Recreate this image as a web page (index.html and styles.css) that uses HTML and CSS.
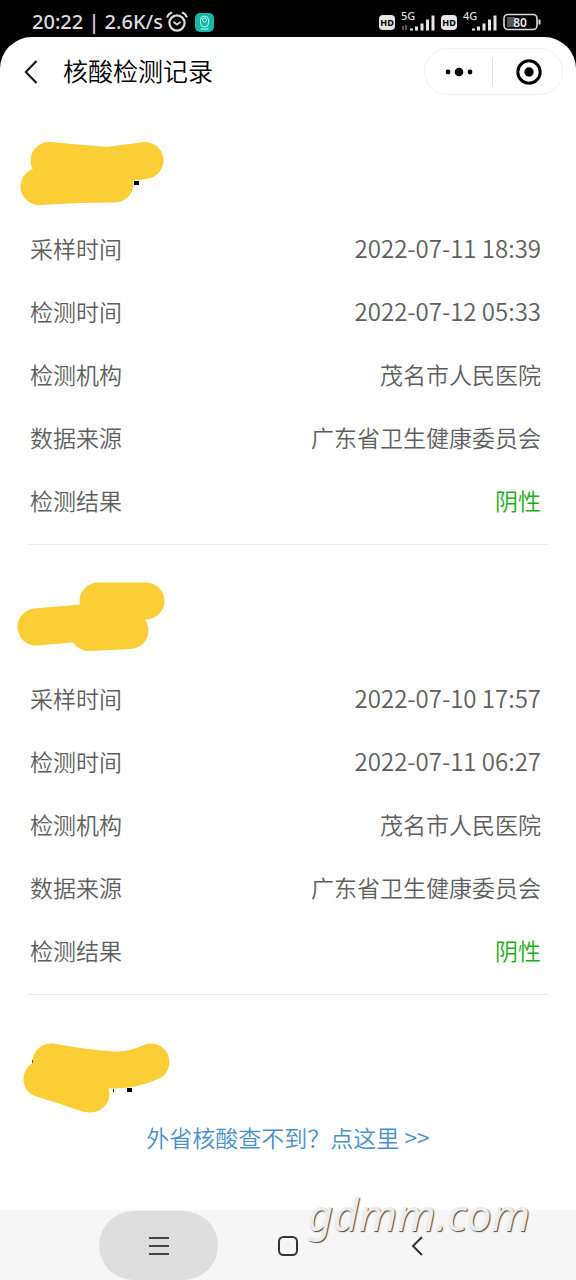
FILE: index.html
```html
<!DOCTYPE html>
<html lang="zh-CN">
<head>
<meta charset="utf-8">
<meta name="viewport" content="width=device-width, initial-scale=1">
<title>核酸检测记录</title>
<link rel="stylesheet" href="styles.css">
</head>
<body>
<div class="status">
  <div class="status-left">
    <span>20:22 | 2.6K/s</span>
    <svg width="22" height="22" viewBox="0 0 22 22" fill="none" stroke="#dcdcdc" stroke-width="2.2" stroke-linecap="round"><circle cx="11" cy="12" r="7.6"/><path d="M8 11.2l3 2.4 3-2.4" stroke-width="1.8"/><path d="M1.4 5.6Q2.6 3 5.2 1.8M20.6 5.6Q19.4 3 16.8 1.8"/></svg>
    <svg class="app-badge" width="19" height="19" viewBox="0 0 19 19" fill="none" stroke="#b9fff4"><rect width="19" height="19" rx="5" fill="#14b8a6" stroke="none"/><rect x="5.5" y="3" width="8" height="11" rx="4"/><circle cx="9.5" cy="7" r="2"/><path d="M5.5 16h8"/></svg>
  </div>
  <div class="status-right">
    <span class="hd">HD</span>
    <span class="signal"><span class="net">5G</span><svg width="34" height="20" viewBox="0 0 34 20"><path d="M2 18v-4M5 13v5" stroke="#777" stroke-width="1.5"/><path d="M9 16.500h3v2h-3zM14 14.500h3v4h-3zM19.500 11.500h3v7h-3zM25 7.500h3v11h-3zM30.500 3.500h3v15h-3z" fill="#e4e4e4"/></svg></span>
    <span class="hd">HD</span>
    <span class="signal"><span class="net">4G</span><svg width="34" height="20" viewBox="0 0 34 20"><path d="M9 16.500h3v2h-3zM14 14.500h3v4h-3zM19.500 11.500h3v7h-3zM25 7.500h3v11h-3zM30.500 3.500h3v15h-3z" fill="#e4e4e4"/></svg></span>
    <svg class="battery" width="38" height="18" viewBox="0 0 38 18"><rect x="1" y="1.500" width="33" height="15" rx="4" fill="none" stroke="#dcdcdc" stroke-width="1.6"/><path d="M4 4h8v10H4z" fill="#555"/><path d="M36.500 6.500v5" stroke="#dcdcdc" stroke-width="2"/><text class="level" x="17" y="13.500" text-anchor="middle">80</text></svg>
  </div>
</div>

<div class="screen">
  <header class="header">
    <button class="back" aria-label="返回"><svg width="14" height="24" viewBox="0 0 14 24" fill="none" stroke="#111" stroke-width="2"><path d="M12.500 1L1.800 12l10.700 11"/></svg></button>
    <h1 class="title">核酸检测记录</h1>
    <div class="capsule">
      <button class="capsule-btn" aria-label="更多"><svg width="28" height="10" viewBox="0 0 28 10"><circle cx="3" cy="5" r="2.400"/><circle cx="14" cy="5" r="4.300"/><circle cx="25" cy="5" r="2.400"/></svg></button>
      <button class="capsule-btn" aria-label="关闭"><svg width="26" height="26" viewBox="0 0 26 26"><circle cx="13" cy="13" r="11.200" fill="none" stroke="#000" stroke-width="3"/><circle cx="13" cy="13" r="4.700"/></svg></button>
    </div>
  </header>

  <main class="main">
    <section class="record">
      <svg class="name" width="180" height="112" viewBox="0 0 180 112"><path d="M134 75h5v4h-5z"/><path class="marker" d="M49 54.500Q74 57 107 59.500L145 54.500"/><path class="marker" d="M39 80.500Q80 78 115 78"/><path class="fill" d="M40 60h75v25H40z"/></svg>
      <dl class="fields">
        <div class="field"><dt>采样时间</dt><dd class="time">2022-07-11 18:39</dd></div>
        <div class="field"><dt>检测时间</dt><dd class="time">2022-07-12 05:33</dd></div>
        <div class="field"><dt>检测机构</dt><dd>茂名市人民医院</dd></div>
        <div class="field"><dt>数据来源</dt><dd>广东省卫生健康委员会</dd></div>
        <div class="field"><dt>检测结果</dt><dd class="negative">阴性</dd></div>
      </dl>
    </section>
    <section class="record">
      <svg class="name" width="180" height="112" viewBox="0 0 180 112"><path class="marker" d="M98 45H146M36 71L100 65.500M89 76.500L130 74.500"/></svg>
      <dl class="fields">
        <div class="field"><dt>采样时间</dt><dd class="time">2022-07-10 17:57</dd></div>
        <div class="field"><dt>检测时间</dt><dd class="time">2022-07-11 06:27</dd></div>
        <div class="field"><dt>检测机构</dt><dd>茂名市人民医院</dd></div>
        <div class="field"><dt>数据来源</dt><dd>广东省卫生健康委员会</dd></div>
        <div class="field"><dt>检测结果</dt><dd class="negative">阴性</dd></div>
      </dl>
    </section>
    <section class="record">
      <svg class="name" width="180" height="112" viewBox="0 0 180 112"><path d="M127 82h5v4h-5zM32 54h3v3h-3zM113 83h1v3h-1z"/><path class="marker" d="M51 56Q84 62 112 64Q131 65 151 56"/><path class="marker" d="M42 73Q66 80 82 86Q87 88 91 88"/><path class="fill" d="M45 61h60v15H45z"/></svg>
    </section>
    <a class="more" href="#other">外省核酸查不到？点这里 &gt;&gt;</a>
  </main>

  <nav class="nav">
    <button class="nav-btn active" aria-label="最近任务"><svg width="20" height="20" viewBox="0 0 20 20" stroke="#444" stroke-width="2"><path d="M0 2h20M0 10h20M0 18h20"/></svg></button>
    <button class="nav-btn" aria-label="主屏幕"><svg width="20" height="20" viewBox="0 0 20 20" fill="none" stroke="#333" stroke-width="2"><rect x="1" y="1" width="18" height="18" rx="4.500"/></svg></button>
    <button class="nav-btn" aria-label="返回上一页"><svg width="12" height="20" viewBox="0 0 12 20" fill="none" stroke="#333" stroke-width="2"><path d="M11 1L2 10l9 9"/></svg></button>
    <span class="watermark">gdmm.com</span>
  </nav>
</div>
</body>
</html>
```
FILE: styles.css
```css
* { box-sizing: border-box; }

body {
  margin: 0;
  min-height: 100vh;
  display: flex;
  flex-direction: column;
  background: #000;
  color: #5e5e5e;
  font-family: "Noto Sans CJK SC", sans-serif;
  font-size: 23px;
  font-weight: 350;
}

button {
  border: 0;
  padding: 0;
  background: none;
  display: flex;
  align-items: center;
  justify-content: center;
}

svg { display: block; flex-shrink: 0; }

/* status bar */
.status {
  height: 37px;
  padding: 7px 35px 0 32px;
  display: flex;
  align-items: center;
  justify-content: space-between;
  color: #dcdcdc;
  font-family: "Noto Sans", sans-serif;
  font-size: 20px;
  font-weight: 500;
  line-height: 28px;
}
.status-left { display: flex; align-items: center; gap: 3px; }
.app-badge { margin-left: 4px; }
.status-right { display: flex; align-items: center; gap: 6px; }
.hd {
  width: 16px;
  height: 15px;
  border-radius: 4px;
  background: #e4e4e4;
  color: #000;
  font: 700 9px/15px "Noto Sans", sans-serif;
  text-align: center;
}
.signal { position: relative; }
.net {
  position: absolute;
  left: 0;
  top: -4px;
  font: 500 11px/16px "Noto Sans", sans-serif;
}
.level { font: 600 12px "Noto Sans", sans-serif; fill: #eee; }

/* page */
.screen {
  flex: 1;
  display: flex;
  flex-direction: column;
  background: #fff;
  border-radius: 32px 32px 0 0;
}
.header {
  height: 69px;
  padding: 0 13px 0 24px;
  display: flex;
  align-items: center;
}
.title {
  margin: 0 auto 0 25px;
  padding-bottom: 4px;
  color: #000;
  font-size: 25px;
  font-weight: 350;
  line-height: 36px;
}
.capsule {
  width: 139px;
  height: 47px;
  display: flex;
  align-items: center;
  border: 1px solid #f0f0f0;
  border-radius: 24px;
}
.capsule-btn { flex: 1; height: 28px; }
.capsule-btn + .capsule-btn { padding-left: 2px; border-left: 1px solid #e2e2e2; }

.main {
  flex: 1;
  display: flex;
  flex-direction: column;
  padding: 0 28px;
}
.record + .record { margin-top: 11px; }
.name { margin-left: -28px; }
.marker {
  fill: none;
  stroke: #fbce35;
  stroke-width: 37px;
  stroke-linecap: round;
  stroke-linejoin: round;
}
.fill { fill: #fbce35; }

.fields {
  margin: 0;
  padding-bottom: 11px;
  border-bottom: 1px solid #ebebeb;
}
.field {
  height: 63px;
  padding: 0 7px 4px 2px;
  display: flex;
  align-items: center;
  justify-content: space-between;
}
.field dd { margin: 0; }
.field .time { font-size: 24px; }
.field .negative { color: #1aad19; }

.more {
  align-self: center;
  color: #4990cd;
  line-height: 38px;
  text-decoration: none;
}

/* system navigation */
.nav {
  position: relative;
  height: 70px;
  padding: 1px 94px 0;
  display: flex;
  background: #f6f6f6;
}
.nav-btn { flex: 1; margin: 0 5px; border-radius: 48px; }
.nav-btn.active { background: #dedede; }
.watermark {
  position: absolute;
  right: 46px;
  bottom: 37px;
  color: #ededed;
  font: italic 400 44px/58px "Noto Sans", sans-serif;
  text-shadow: 1px 1px 1px #444;
}
```
